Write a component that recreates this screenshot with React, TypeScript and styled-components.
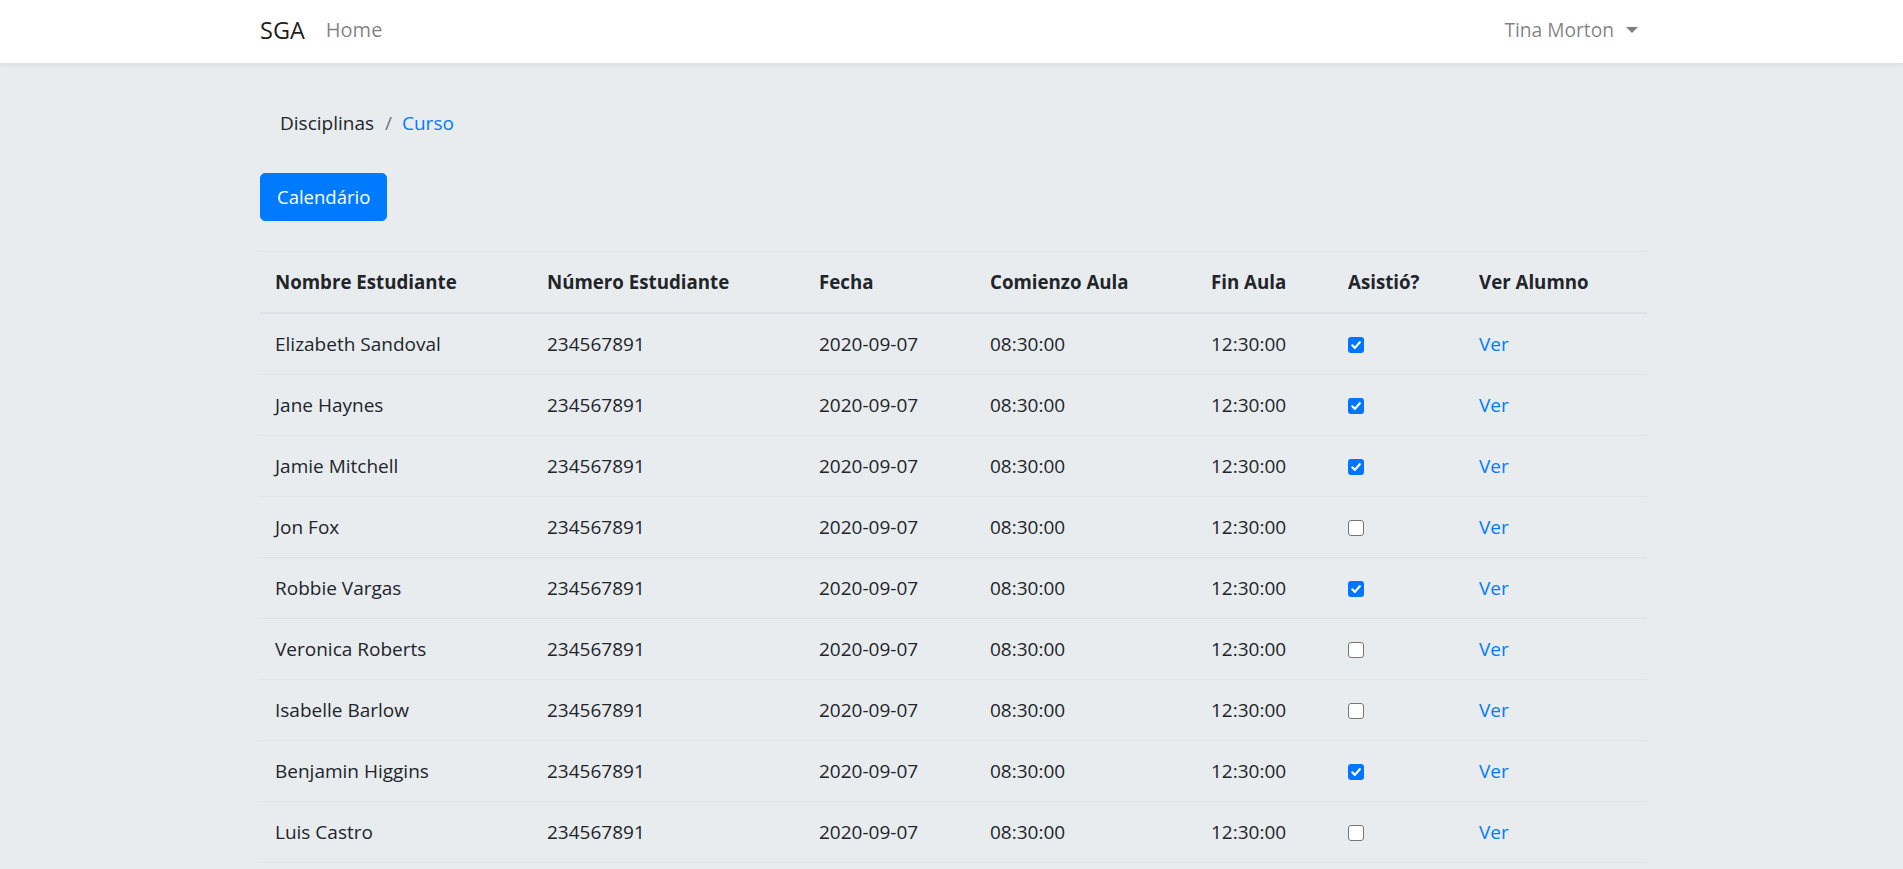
import React from 'react'
import styled, { createGlobalStyle } from 'styled-components'

const GlobalStyle = createGlobalStyle`
  html, body {
    margin: 0;
    padding: 0;
  }
  body {
    background: #e9ecef;
    color: #212529;
    font-family: "Open Sans", "Noto Sans", Arial, sans-serif;
    font-size: 19px;
    line-height: 30px;
  }
`

const Container = styled.div`
  box-sizing: border-box;
  width: 1391px;
  padding-left: 4px;
  margin: 0 auto;
`

const Navbar = styled.header`
  background: #fff;
  height: 63px;
  box-shadow: 0 2px 5px rgba(0, 0, 0, 0.07);
`

const NavInner = styled(Container)`
  display: flex;
  align-items: center;
  height: 100%;
  padding-bottom: 3px;
`

const Brand = styled.a`
  font-size: 23.5px;
  color: rgba(0, 0, 0, 0.9);
  margin-right: 21px;
  text-decoration: none;
`

const NavLink = styled.a<{ $toggle?: boolean }>`
  font-size: ${({ $toggle }) => ($toggle ? '19.2px' : '20px')};
  color: rgba(0, 0, 0, 0.5);
  text-decoration: none;
  margin-left: ${({ $toggle }) => ($toggle ? 'auto' : '0')};
  padding-right: ${({ $toggle }) => ($toggle ? '9px' : '0')};

  ${({ $toggle }) =>
    $toggle &&
    `
    &::after {
      content: '';
      display: inline-block;
      margin-left: 12px;
      vertical-align: 4px;
      border-top: 6px solid rgba(0, 0, 0, 0.5);
      border-left: 6px solid transparent;
      border-right: 6px solid transparent;
    }
  `}
`

const Main = styled(Container)`
  padding-top: 30px;
`

const Breadcrumb = styled.ol`
  display: flex;
  list-style: none;
  margin: 0 0 20px;
  padding: 15px 20px;
`

const Crumb = styled.li<{ $active?: boolean }>`
  color: ${({ $active }) => ($active ? '#007bff' : '#212529')};

  &:not(:first-child)::before {
    content: '/';
    color: #6c757d;
    padding: 0 10px 0 11px;
  }
`

const Button = styled.button`
  display: block;
  font-family: inherit;
  font-size: 18.5px;
  line-height: 30px;
  color: #fff;
  background: #007bff;
  border: 1px solid #007bff;
  border-radius: 5px;
  padding: 8px 16px;
  margin-bottom: 30px;
  cursor: pointer;
`

const Table = styled.table`
  width: 100%;
  border-collapse: collapse;
  table-layout: fixed;
`

const Th = styled.th<{ $w: number }>`
  box-sizing: border-box;
  width: ${({ $w }) => $w}px;
  text-align: left;
  font-size: 18.7px;
  font-weight: 700;
  padding: 15px;
  border-top: 1px solid #dee2e6;
  border-bottom: 2px solid #dee2e6;
`

const Td = styled.td`
  padding: 15px;
  border-top: 1px solid #dee2e6;
  border-bottom: 1px solid #dee2e6;
  white-space: nowrap;
`

const Check = styled.span<{ $checked: boolean }>`
  display: inline-block;
  box-sizing: border-box;
  width: 16px;
  height: 16px;
  vertical-align: -2px;
  border-radius: 3px;
  background: ${({ $checked }) => ($checked ? '#0075ff' : '#fff')};
  border: ${({ $checked }) => ($checked ? 'none' : '1px solid #767676')};

  svg {
    display: block;
    margin: 2px;
  }
`

const ViewLink = styled.a`
  color: #007bff;
  text-decoration: none;
`

const columns: [string, number][] = [
  ['Nombre Estudiante', 272],
  ['Número Estudiante', 272],
  ['Fecha', 171],
  ['Comienzo Aula', 221],
  ['Fin Aula', 137],
  ['Asistió?', 131],
  ['Ver Alumno', 183],
]

const students: [string, boolean][] = [
  ['Elizabeth Sandoval', true],
  ['Jane Haynes', true],
  ['Jamie Mitchell', true],
  ['Jon Fox', false],
  ['Robbie Vargas', true],
  ['Veronica Roberts', false],
  ['Isabelle Barlow', false],
  ['Benjamin Higgins', true],
  ['Luis Castro', false],
]

const Checkbox = ({ checked }: { checked: boolean }) => (
  <Check $checked={checked}>
    {checked && (
      <svg width="12" height="12" viewBox="0 0 12 12">
        <path d="M2.3 6.3 L4.9 8.9 L9.8 3.2" fill="none" stroke="#fff" strokeWidth="2.2" strokeLinecap="round" strokeLinejoin="round" />
      </svg>
    )}
  </Check>
)

export default function App() {
  return (
    <>
      <GlobalStyle />
      <Navbar>
        <NavInner>
          <Brand href="#">SGA</Brand>
          <NavLink href="#">Home</NavLink>
          <NavLink href="#" $toggle>
            Tina Morton
          </NavLink>
        </NavInner>
      </Navbar>
      <Main>
        <Breadcrumb>
          <Crumb>Disciplinas</Crumb>
          <Crumb $active>Curso</Crumb>
        </Breadcrumb>
        <Button>Calendário</Button>
        <Table>
          <thead>
            <tr>
              {columns.map(([label, w]) => (
                <Th key={label} $w={w}>
                  {label}
                </Th>
              ))}
            </tr>
          </thead>
          <tbody>
            {students.map(([name, attended]) => (
              <tr key={name}>
                <Td>{name}</Td>
                <Td>234567891</Td>
                <Td>2020-09-07</Td>
                <Td>08:30:00</Td>
                <Td>12:30:00</Td>
                <Td>
                  <Checkbox checked={attended} />
                </Td>
                <Td>
                  <ViewLink href="#">Ver</ViewLink>
                </Td>
              </tr>
            ))}
          </tbody>
        </Table>
      </Main>
    </>
  )
}
